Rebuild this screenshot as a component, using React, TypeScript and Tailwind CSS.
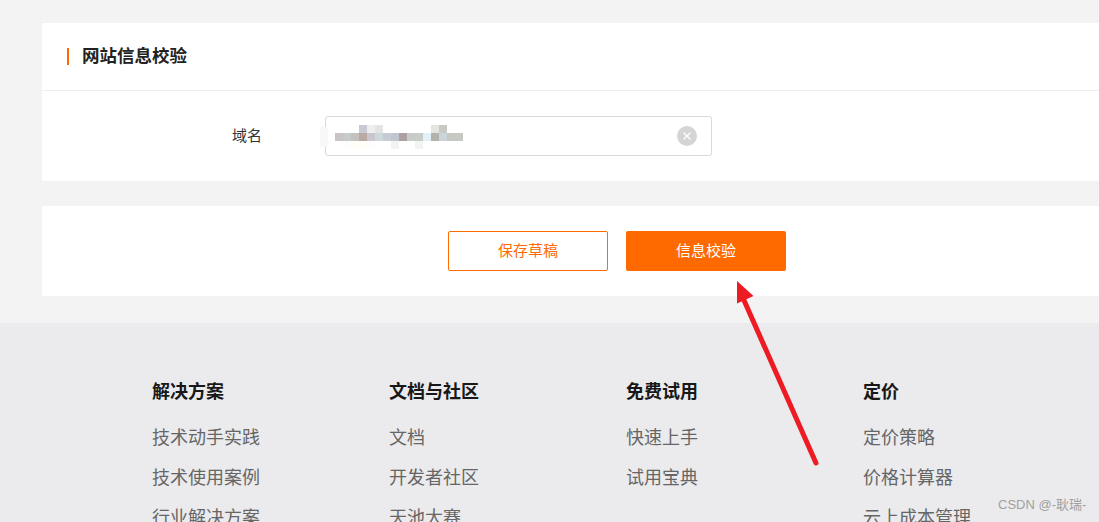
const font = '[font-family:"Noto_Sans_CJK_SC","Liberation_Sans",sans-serif]';

// mosaic over the domain value
const mosaicUpper = [
  '#ffffff', '#ffffff', '#ffffff', '#c9c9d5', '#eeeeee', '#e4e4e4', '#ffffff', '#ffffff',
  '#ffffff', '#ffffff', '#ffffff', '#ffffff', '#e4e4e2', '#c8c9c2', '#ffffff', '#ffffff',
];
const mosaicMid = [
  '#c9c4c6', '#c8cbcb', '#c2c1bd', '#b9aaa4', '#cbc6cd', '#cdd8da', '#c5ccd2', '#c3c5cf',
  '#ada0a0', '#c9cbca', '#c8cdc8', '#e4f0f8', '#b3b3ab', '#ccd3d9', '#c6c8c4', '#c6c8c3',
];
const mosaicLower = [
  '#ffffff', '#fcfdff', '#fffef8', '#fffef8', '#fdfdfb', '#ffffff', '#ffffff', '#f3f3f3',
  '#ffffff', '#ffffff', '#f2f4f2', '#ffffff', '#ffffff', '#ffffff', '#ffffff', '#ffffff',
];

const columns = [
  { title: '解决方案', links: ['技术动手实践', '技术使用案例', '行业解决方案'] },
  { title: '文档与社区', links: ['文档', '开发者社区', '天池大赛'] },
  { title: '免费试用', links: ['快速上手', '试用宝典'] },
  { title: '定价', links: ['定价策略', '价格计算器', '云上成本管理'] },
];

export default function App() {
  return (
    <div className={`relative h-[522px] w-full overflow-hidden bg-[#f3f3f3] ${font}`}>
      <div className="pl-[42px] pt-[23px]">
        <section className="h-[158px] bg-white">
          <div className="flex h-[68px] items-center border-b border-[#eeeeee] pl-[25px]">
            <span className="h-[17px] w-[2px] bg-[#ff6a00]" />
            <h2 className="mb-[3px] ml-[13px] text-[17.5px] leading-[24px] font-bold text-[#222222]">网站信息校验</h2>
          </div>
          <div className="flex items-center pt-[25px]">
            <label className="w-[220px] pb-[2px] text-right text-[15px] leading-[38px] text-[#333333]">域名</label>
            <div className="relative ml-[63px] flex h-[40px] w-[387px] items-center justify-between rounded-[3px] border border-[#d8d8d8] pr-[14px] pl-[9px]">
              {/* leftover of the blur, sits on the input's border */}
              <span className="absolute top-[10px] -left-[6px] h-[20px] w-[8px] bg-[#f8f8f8]" />
              <div className="mt-[2px] flex flex-col">
                {[mosaicUpper, mosaicMid, mosaicLower].map((row, r) => (
                  <div key={r} className="flex">
                    {row.map((c, i) => (
                      <span key={i} className="h-[8px] w-[8px]" style={{ backgroundColor: c }} />
                    ))}
                  </div>
                ))}
              </div>
              <span className="flex h-[20px] w-[20px] items-center justify-center rounded-full bg-[#d4d4d4]">
                <svg width="10" height="10" viewBox="0 0 10 10" fill="none" stroke="#ffffff" strokeWidth="1.3">
                  <path d="M1.500 1.500l7 7M8.500 1.500l-7 7" />
                </svg>
              </span>
            </div>
          </div>
        </section>

        <section className="mt-[25px] flex h-[90px] items-center bg-white pl-[406px]">
          <button className="h-[40px] w-[160px] rounded-[2px] border border-[#ff6a00] bg-white pb-[2px] text-[15px] text-[#ff6a00]">
            保存草稿
          </button>
          <button className="ml-[18px] h-[40px] w-[160px] rounded-[2px] bg-[#ff6a00] pb-[2px] text-[15px] text-white">
            信息校验
          </button>
        </section>
      </div>

      <footer className="mt-[27px] grid h-[199px] grid-cols-[237px_237px_237px_237px] bg-[#ebebed] pt-[54px] pl-[152px]">
        {columns.map((col) => (
          <div key={col.title}>
            <h3 className="text-[18px] leading-[26px] font-bold text-[#181818]">{col.title}</h3>
            <ul className="mt-[13px]">
              {col.links.map((l) => (
                <li key={l} className="text-[18px] leading-[40px] whitespace-nowrap text-[#666666]">
                  {l}
                </li>
              ))}
            </ul>
          </div>
        ))}
      </footer>

      {/* annotation arrow drawn over the page */}
      <svg className="absolute top-[275px] left-[728px]" width="100" height="200" viewBox="728 275 100 200">
        <path d="M737 281L737 303.500L753.500 296Z" fill="#ed1c24" />
        <path d="M743 298L816 463" stroke="#ed1c24" strokeWidth="5" strokeLinecap="round" fill="none" />
      </svg>

      {/* csdn watermark */}
      <span className="absolute top-[495px] left-[998px] [font-family:'Liberation_Sans','Noto_Sans_CJK_SC',sans-serif] text-[13px] leading-[20px] whitespace-nowrap text-[#a0a0a0]">
        CSDN @-耿瑞-
      </span>
    </div>
  );
}
